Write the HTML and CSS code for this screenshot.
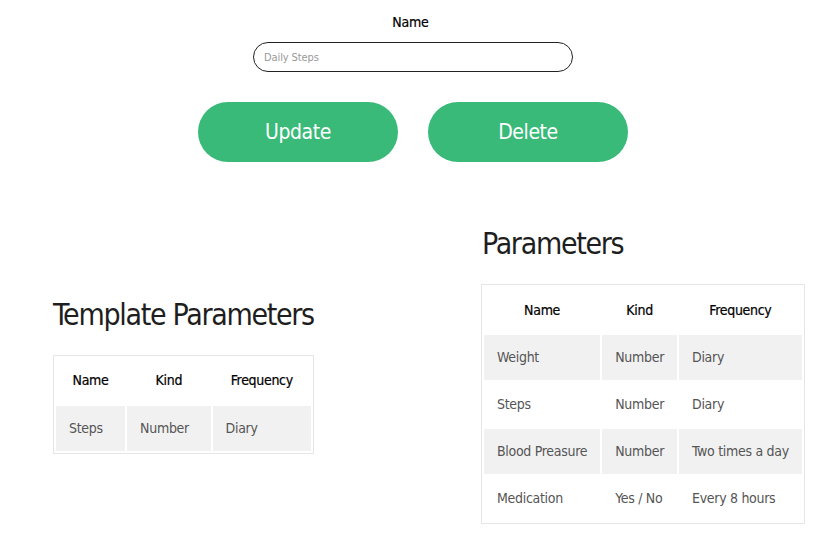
FILE: index.html
```html
<!DOCTYPE html>
<html>
<head>
<meta charset="utf-8">
<link rel="stylesheet" href="styles.css">
</head>
<body>
<div class="page">
  <form class="editor">
    <label class="field-label" for="name">Name</label>
    <input class="field-input" id="name" type="text" placeholder="Daily Steps">
    <div class="actions">
      <button type="button" class="btn">Update</button>
      <button type="button" class="btn">Delete</button>
    </div>
  </form>
  <div class="columns">
    <section class="col col-left">
      <h2 class="col-title">Template Parameters</h2>
      <table class="ptable ptable-template">
        <thead>
          <tr><th>Name</th><th>Kind</th><th>Frequency</th></tr>
        </thead>
        <tbody>
          <tr class="shade"><td>Steps</td><td>Number</td><td>Diary</td></tr>
        </tbody>
      </table>
    </section>
    <section class="col col-right">
      <h2 class="col-title">Parameters</h2>
      <table class="ptable">
        <thead>
          <tr><th>Name</th><th>Kind</th><th>Frequency</th></tr>
        </thead>
        <tbody>
          <tr class="shade"><td>Weight</td><td>Number</td><td>Diary</td></tr>
          <tr><td>Steps</td><td>Number</td><td>Diary</td></tr>
          <tr class="shade"><td>Blood Preasure</td><td>Number</td><td>Two times a day</td></tr>
          <tr><td>Medication</td><td>Yes / No</td><td>Every 8 hours</td></tr>
        </tbody>
      </table>
    </section>
  </div>
</div>
</body>
</html>
```
FILE: styles.css
```css
* { box-sizing: border-box; }
html, body { background: #fff; }
body {
  margin: 8px;
  font-family: "DejaVu Sans Condensed", "DejaVu Sans", sans-serif;
  color: #222;
}
.page { width: 810px; }
.editor {
  display: flex;
  flex-direction: column;
  align-items: center;
}
.field-label {
  font-size: 14px;
  line-height: 18px;
  letter-spacing: -0.2px;
  color: #000;
  margin-top: 5px;
  margin-right: 5px;
  -webkit-text-stroke: 0.2px #000;
}
.field-input {
  margin-top: 11px;
  width: 320px;
  height: 30px;
  border: 1px solid #222;
  border-radius: 15px;
  padding: 0 10px;
  font-family: inherit;
  font-size: 11px;
  letter-spacing: -0.1px;
  color: #333;
  outline: none;
}
.field-input::placeholder { color: #999; }
.actions {
  display: flex;
  gap: 30px;
  margin-top: 30px;
}
.btn {
  width: 200px;
  height: 60px;
  border: none;
  border-radius: 30px;
  background: #39ba78;
  color: #fff;
  font-family: inherit;
  font-size: 21px;
  letter-spacing: -0.4px;
  cursor: pointer;
}
.columns {
  display: flex;
  align-items: center;
  padding-left: 45px;
  margin-top: 62px;
}
.col { flex-shrink: 0; }
.col-left { width: 428px; }
.col-title {
  font-weight: normal;
  font-size: 30px;
  line-height: 40px;
  letter-spacing: -1.3px;
  margin: 0 0 20px 0;
  color: #1e1e1e;
}
.col-right .col-title { margin-left: 1px; }
.ptable {
  border: 1px solid #e6e6e6;
  border-spacing: 2px;
  font-size: 14px;
  letter-spacing: -0.3px;
}
.ptable-template { width: 261px; }
.ptable th, .ptable td {
  padding: 12px 13px;
  line-height: 21px;
  height: 45px;
  white-space: nowrap;
}
.ptable th {
  font-weight: normal;
  color: #000;
  text-align: center;
  height: 46px;
  -webkit-text-stroke: 0.2px #000;
}
.ptable td {
  text-align: left;
  color: #555;
}
.shade td { background: #f1f1f1; }
```
